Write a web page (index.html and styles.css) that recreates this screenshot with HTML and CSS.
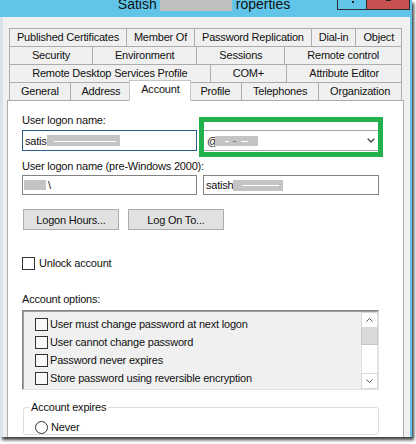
FILE: index.html
```html
<!DOCTYPE html>
<html>
<head>
<meta charset="utf-8">
<link rel="stylesheet" href="styles.css">
</head>
<body>
<div class="window">
  <div class="titlebar">
    <span class="ttext">Satish</span><span class="redact r-title"></span><span class="ttext">roperties</span>
    <div class="winctl"><div class="btn-min"></div><div class="btn-close"></div></div>
  </div>
  <div class="client">
    <div class="tabs">
      <div class="tabrow">
        <div class="tab">Published Certificates</div>
        <div class="tab">Member Of</div>
        <div class="tab">Password Replication</div>
        <div class="tab">Dial-in</div>
        <div class="tab">Object</div>
      </div>
      <div class="tabrow">
        <div class="tab">Security</div>
        <div class="tab">Environment</div>
        <div class="tab">Sessions</div>
        <div class="tab">Remote control</div>
      </div>
      <div class="tabrow">
        <div class="tab">Remote Desktop Services Profile</div>
        <div class="tab">COM+</div>
        <div class="tab">Attribute Editor</div>
      </div>
      <div class="tabrow">
        <div class="tab">General</div>
        <div class="tab">Address</div>
        <div class="tab active">Account</div>
        <div class="tab">Profile</div>
        <div class="tab">Telephones</div>
        <div class="tab">Organization</div>
      </div>
    </div>
    <div class="panel">
      <div class="label">User logon name:</div>
      <div class="fieldrow row1">
        <div class="input focus"><span>satis</span><span class="redact r-in1"></span></div>
        <div class="input combo"><span class="combo-val"><span>@</span><span class="redact r-combo"></span></span>
          <svg class="chev" width="8" height="5" viewBox="0 0 8 5"><polyline points="0.7,0.7 4,4 7.3,0.7" fill="none" stroke="#4a4a4a" stroke-width="1.4"/></svg>
        </div>
        <div class="highlight"></div>
      </div>
      <div class="label label2">User logon name (pre-Windows 2000):</div>
      <div class="fieldrow row2">
        <div class="input short nopad"><span class="redact r-pre"></span><span class="bs">\</span></div>
        <div class="input short"><span>satish</span><span class="redact r-sam"></span></div>
      </div>
      <div class="buttons">
        <div class="button">Logon Hours...</div>
        <div class="button">Log On To...</div>
      </div>
      <div class="check-row"><span class="cb"></span><span>Unlock account</span></div>
      <div class="label opts-label">Account options:</div>
      <div class="list">
        <div class="items">
          <div class="item"><span class="cb"></span><span>User must change password at next logon</span></div>
          <div class="item"><span class="cb"></span><span>User cannot change password</span></div>
          <div class="item"><span class="cb"></span><span>Password never expires</span></div>
          <div class="item"><span class="cb"></span><span>Store password using reversible encryption</span></div>
        </div>
        <div class="sb">
          <div class="sb-btn"><svg width="7" height="4" viewBox="0 0 7 4"><polyline points="0.5,3.5 3.5,0.5 6.5,3.5" fill="none" stroke="#555" stroke-width="1"/></svg></div>
          <div class="sb-thumb"></div>
          <div class="sb-track"></div>
          <div class="sb-btn"><svg width="7" height="4" viewBox="0 0 7 4"><polyline points="0.5,0.5 3.5,3.5 6.5,0.5" fill="none" stroke="#555" stroke-width="1"/></svg></div>
        </div>
      </div>
      <fieldset class="group">
        <legend>Account expires</legend>
        <div class="radio-row"><span class="radio"></span><span>Never</span></div>
      </fieldset>
    </div>
  </div>
</div>
</body>
</html>
```
FILE: styles.css
```css
* { box-sizing: border-box; }
html, body { margin: 0; padding: 0; background: #fff; }
body {
  width: 416px; height: 444px; overflow: hidden;
  font-family: "Liberation Sans", Arial, sans-serif;
  font-size: 11px; letter-spacing: -0.2px; color: #111;
}
.window {
  width: 412px; height: 437px; background: #f0f0f0;
  display: flex; flex-direction: column; overflow: hidden;
  box-shadow: 2px 3px 3px rgba(0,0,0,0.75);
}
.titlebar {
  flex: none; height: 17px; background: #61c5ea; position: relative;
  display: flex; justify-content: center; align-items: flex-start;
  font-size: 14px; letter-spacing: 0; line-height: 12px; color: #111;
  padding-right: 4px;
}
.ttext { margin-top: -2px; }
.redact { display: inline-block; flex: none; background: #c4c4c4; }
.r-title { width: 72px; height: 11px; margin: 0 4px 0 3px; background: #c0c0c0; }
.winctl { position: absolute; top: 0; right: 2px; display: flex; }
.btn-min { width: 29px; height: 10px; border: 1px solid #2c2c2c; border-top: 0; border-right: 0; position: relative; }
.btn-min::after { content: ""; position: absolute; left: 14px; top: 1px; width: 2px; height: 2px; background: #222; }
.btn-close { width: 44px; height: 10px; background: #c75050; border: 1px solid #2c2c2c; border-top: 0; position: relative; }
.btn-close::after { content: ""; position: absolute; left: 19px; top: 0; width: 5px; height: 1px; background: #222; }
.client {
  flex: 1; min-height: 0; display: flex; flex-direction: column;
  border-left: 3px solid #d8e2eb; border-right: 2px solid #5fc3e8;
  padding: 11px 6px 0 4px;
}
.tabs { margin: 0 2px; flex: none; }
.tabrow { display: flex; }
.tabrow + .tabrow { margin-top: -1px; }
.tab {
  flex: 1 1 auto; height: 19px; line-height: 17px; padding: 0 1px;
  border: 1px solid #acacac; background: #f0f0f0; margin-left: -1px;
  text-align: center; white-space: nowrap;
}
.tab:first-child { margin-left: 0; }
.tab.active {
  background: #fff; height: 21px; padding-bottom: 2px;
  margin: -2px -2px 0 -3px; border-color: #c6c6c6 #c6c6c6 #fff #c6c6c6;
  position: relative; z-index: 2;
}
.panel {
  flex: 1; min-height: 0; margin-top: -1px; background: #fff;
  border: 1px solid #acacac; border-bottom: 0;
  padding: 12px 0 0 14px;
}
.label { height: 14px; line-height: 14px; white-space: nowrap; }
.label2 { margin-top: 8px; }
.fieldrow { display: grid; grid-template-columns: 175px 176px; column-gap: 6px; position: relative; }
.row1 { margin-top: 3px; }
.row2 { margin-top: 2px; }
.input {
  height: 21px; border: 1px solid #828282; background: #fff;
  display: flex; align-items: center; padding-left: 2px; white-space: nowrap; overflow: hidden;
}
.input.short { height: 20px; }
.input.nopad { padding-left: 0; }
.input.focus { border-color: #2a5d8c; }
.combo { border-color: #a3a3a3; justify-content: space-between; padding: 0 3px 0 3px; }
.combo-val { display: flex; align-items: center; }
.chev { flex: none; }
.r-in1 { width: 73px; height: 11px; background: linear-gradient(#fff, #fff) 7px 6px / 62px 1px no-repeat #c4c4c4; }
.r-combo { width: 43px; height: 10px; margin-left: -3px; background: linear-gradient(90deg, #c4c4c4 0 10px, #fff 10px 14px, #c4c4c4 14px 18px, #777 18px 21px, #c4c4c4 21px 26px, #fff 26px 33px, #c4c4c4 33px) 0 5px / 43px 1px no-repeat #c4c4c4; }
.r-pre { width: 22px; height: 10px; margin-left: 1px; }
.bs { margin-left: 2px; }
.r-sam { width: 50px; height: 11px; margin-left: -1px; background: linear-gradient(#fff, #fff) 9px 5px / 37px 1px no-repeat #c4c4c4; }
.highlight {
  position: absolute; left: 177px; top: -13px; width: 184px; height: 40px;
  border: 5px solid #22b14c;
}
.buttons { display: flex; gap: 9px; margin: 14px 0 0 1px; }
.button {
  width: 96px; height: 21px; background: #e1e1e1; border: 1px solid #adadad;
  display: flex; align-items: center; justify-content: center; white-space: nowrap;
}
.check-row { display: flex; align-items: center; height: 14px; margin-top: 26px; white-space: nowrap; }
.cb { flex: none; width: 13px; height: 13px; border: 1px solid #333; background: #fff; margin-right: 2px; }
.check-row .cb { margin-right: 4px; }
.opts-label { margin-top: 22px; }
.list {
  width: 357px; height: 80px; margin-top: 4px; display: flex;
  border: 1px solid; border-color: #828282 #e3e3e3 #e3e3e3 #828282;
  box-shadow: inset 1px 1px 0 #a0a0a0; background: #f0f0f0;
}
.items { flex: 1; padding: 4px 0 0 12px; white-space: nowrap; overflow: hidden; }
.item { height: 18px; display: flex; align-items: center; }
.item .cb { background: #f8f8f8; }
.sb { flex: none; width: 17px; margin-top: 1px; display: flex; flex-direction: column; }
.sb-btn {
  flex: none; height: 16px; border: 1px solid #d9d9d9; background: #fff;
  display: flex; align-items: center; justify-content: center;
}
.sb-thumb { flex: none; height: 17px; background: #dadada; border: 1px solid #c6c6c6; border-top: 0; }
.sb-track { flex: 1; background: #fff; border-left: 1px solid #e2e2e2; border-right: 1px solid #e2e2e2; }
.group {
  width: 356px; margin: 10px 0 0 1px; padding: 6px 0 0 5px; min-width: 0;
  border: 1px solid #dcdcdc; border-radius: 3px;
}
.group legend { padding: 0 2px; line-height: 14px; }
.radio-row { display: flex; align-items: center; height: 14px; margin-left: 6px; }
.radio { flex: none; width: 13px; height: 13px; border: 1px solid #333; border-radius: 50%; background: #fff; margin-right: 3px; }
```
